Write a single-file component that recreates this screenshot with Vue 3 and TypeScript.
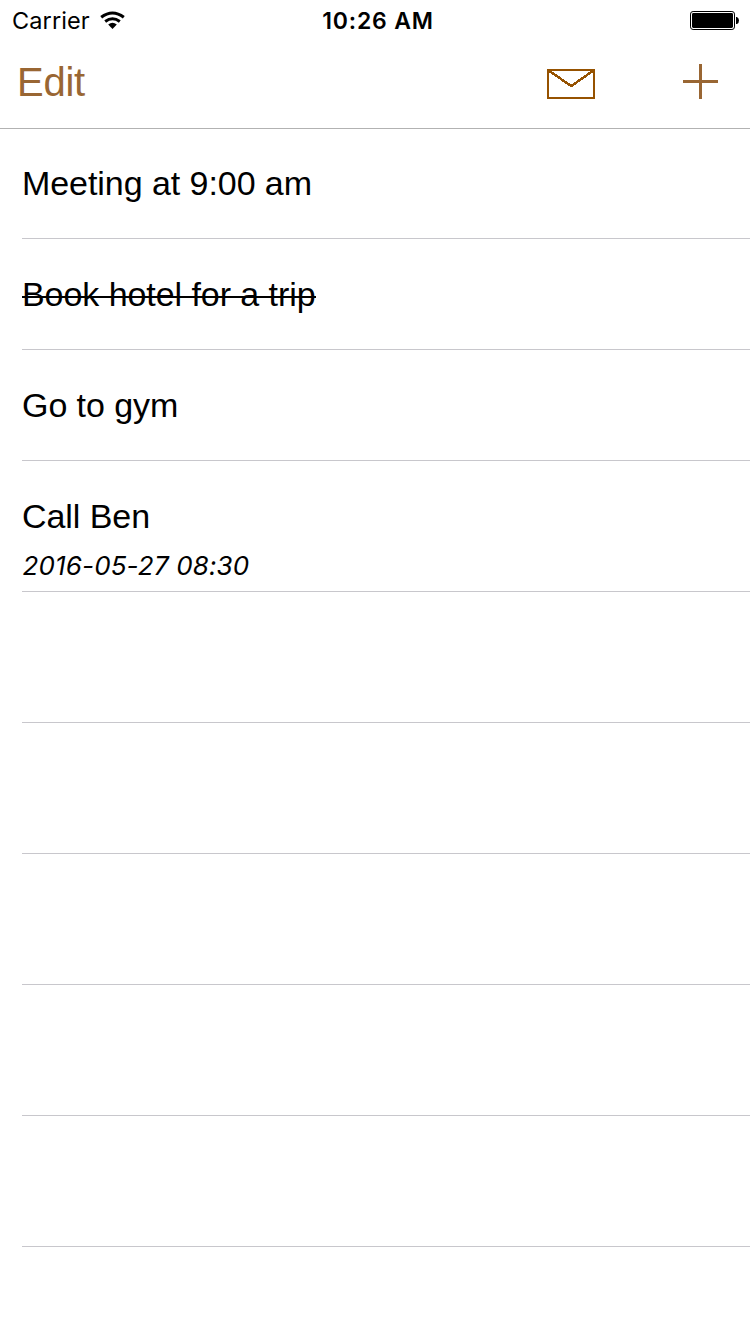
<script setup lang="ts">
interface Task {
  title: string
  done?: boolean
  due?: string
}

const tasks: Task[] = [
  { title: 'Meeting at 9:00 am' },
  { title: 'Book hotel for a trip', done: true },
  { title: 'Go to gym' },
  { title: 'Call Ben', due: '2016-05-27 08:30' },
]
const emptyRows = 5
</script>

<template>
  <div class="screen">
    <header class="top">
      <div class="status">
        <div class="carrier">
          <span class="carrier-name">Carrier</span>
          <svg class="wifi" width="26" height="20" viewBox="0 0 26 20">
            <path d="M1.2 6.3Q12.5 -2.3 23.8 6.3" fill="none" stroke="#000" stroke-width="3.1" />
            <path d="M5.2 10.5Q12.5 4.9 19.8 10.5" fill="none" stroke="#000" stroke-width="2.9" />
            <path d="M8.2 13.6Q12.5 10 16.8 13.6L12.5 18Z" fill="#000" />
          </svg>
        </div>
        <span class="time">10:26 AM</span>
        <div class="power">
          <svg width="50" height="20" viewBox="0 0 50 20">
            <rect x="0.5" y="0.5" width="44" height="18" rx="2.6" fill="none" stroke="#000" />
            <rect x="2" y="2" width="41" height="15" rx="1.4" fill="#000" />
            <path d="M46 6h1q2 1 2 3.5t-2 3.500h-1z" fill="#000" />
          </svg>
        </div>
      </div>
      <nav class="bar">
        <span class="edit">Edit</span>
        <div class="actions">
          <svg width="48" height="30" viewBox="0 0 48 30" fill="none" stroke="#965200" stroke-width="2">
            <rect x="1" y="1" width="46" height="28" />
            <path d="M1.500 1.500L24.300 17L46.500 1.500" stroke-width="2.500" shape-rendering="crispEdges" />
          </svg>
          <svg width="35" height="35" viewBox="0 0 35 35" fill="#996633">
            <rect x="0" y="16" width="35" height="3" />
            <rect x="16" y="0" width="3" height="35" />
          </svg>
        </div>
      </nav>
    </header>
    <ul class="list">
      <li v-for="task in tasks" :key="task.title" class="row" :class="{ tall: task.due }">
        <span class="title" :class="{ done: task.done }">{{ task.title }}</span>
        <span v-if="task.due" class="due">{{ task.due }}</span>
      </li>
      <li v-for="n in emptyRows" :key="n" class="row tall"></li>
    </ul>
  </div>
</template>

<style>
body {
  margin: 0;
  background: #fff;
}
</style>

<style scoped>
.screen {
  width: 750px;
  height: 1334px;
  overflow: hidden;
  background: #fff;
  color: #000;
  font-family: "Liberation Sans", Arial, sans-serif;
}
.top {
  box-sizing: border-box;
  height: 129px;
  border-bottom: 1px solid #b2b2b2;
}
.status {
  display: grid;
  grid-template-columns: 1fr auto 1fr;
  height: 40px;
  padding: 0 10px 0 12px;
  font-family: Inter, sans-serif;
  font-size: 24px;
  line-height: 41px;
}
.carrier {
  display: flex;
  gap: 11px;
}
.carrier-name {
  width: 77px;
  white-space: nowrap;
  font-size: 23.500px;
  letter-spacing: 0.1px;
}
.wifi {
  margin-top: 11px;
}
.time {
  padding-left: 4px;
  font-weight: 600;
  font-size: 23px;
  line-height: 43px;
  letter-spacing: 0.8px;
}
.power {
  display: flex;
  justify-content: flex-end;
  padding-top: 11px;
}
.bar {
  display: flex;
  justify-content: space-between;
  height: 88px;
  padding: 0 32px 0 17px;
}
.edit {
  padding-top: 19px;
  color: #996633;
  font-size: 40px;
  line-height: 47px;
  letter-spacing: -0.25px;
}
.actions {
  display: flex;
  align-items: flex-start;
  gap: 88px;
  padding-top: 24px;
}
.actions svg:first-child {
  margin-top: 5px;
}
.list {
  margin: 0;
  padding: 0 0 0 22px;
  list-style: none;
}
.row {
  box-sizing: border-box;
  display: flex;
  flex-direction: column;
  align-items: flex-start;
  height: 111px;
  padding-top: 36px;
  border-bottom: 1px solid #c8c7cc;
}
.row:first-child {
  height: 110px;
  padding-top: 35px;
}
.row.tall {
  height: 131px;
}
.title {
  font-size: 34px;
  line-height: 39px;
  letter-spacing: -0.06px;
  white-space: nowrap;
}
.done {
  background: linear-gradient(#000, #000) 0 21px / 100% 2px no-repeat;
}
.due {
  margin-top: 14px;
  padding-left: 0.500px;
  font: italic 26px/32px Inter, sans-serif;
  letter-spacing: 0.15px;
  white-space: nowrap;
}
</style>
